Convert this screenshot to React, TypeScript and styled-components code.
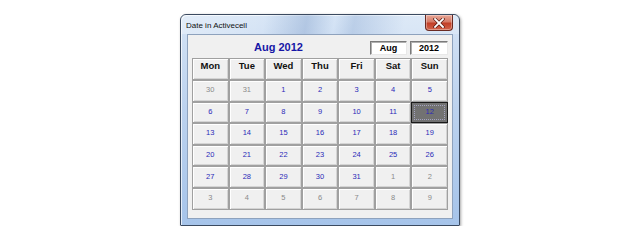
import React from "react"
import styled, { createGlobalStyle } from "styled-components"

const GlobalStyle = createGlobalStyle`
	html, body {
		margin: 0;
		padding: 0;
		background: #ffffff;
		font-family: "Liberation Sans", Arial, sans-serif;
	}
`

const Page = styled.div`
	padding: 14px 0 0 180px;
`

const Window = styled.div`
	width: 280px;
	height: 212px;
	box-sizing: border-box;
	border: 1px solid #3b4a60;
	border-radius: 6px 6px 1px 1px;
	background: linear-gradient(180deg, #d4e3f5 0%, #bcd2ee 45%, #a6c4ea 100%);
	box-shadow: 1px 1px 3px rgba(0, 0, 0, 0.35), inset 1px 1px 0 rgba(255, 255, 255, 0.7);
	display: flex;
	flex-direction: column;
	overflow: hidden;
`

const TitleBar = styled.div`
	height: 19px;
	display: flex;
	align-items: flex-start;
	padding-left: 5px;
	background: linear-gradient(
		100deg,
		rgba(255, 255, 255, 0.35) 0%,
		rgba(255, 255, 255, 0.1) 30%,
		rgba(120, 150, 195, 0.35) 45%,
		rgba(255, 255, 255, 0.05) 55%,
		rgba(120, 150, 195, 0.25) 62%,
		rgba(255, 255, 255, 0.2) 80%
	);
`

const Caption = styled.span`
	flex: 1;
	font-size: 8px;
	line-height: 18px;
	color: #101010;
	padding-top: 2px;
`

const CloseButton = styled.div`
	width: 28px;
	height: 16px;
	margin-right: 6px;
	box-sizing: border-box;
	border: 1px solid #6a2a22;
	border-top: none;
	border-radius: 0 0 4px 4px;
	background: linear-gradient(180deg, #e9a898 0%, #d57a66 45%, #c23f27 55%, #d2644b 100%);
	box-shadow: inset 0 0 0 1px rgba(255, 255, 255, 0.35);
	display: flex;
	align-items: center;
	justify-content: center;
`

const Client = styled.div`
	flex: 1;
	margin: 0 6px 6px 6px;
	box-sizing: border-box;
	border: 1px solid #8ea2bd;
	background: #f0f0f0;
	padding: 0 4px;
	display: flex;
	flex-direction: column;
`

const Header = styled.div`
	height: 22px;
	display: flex;
	align-items: center;
	padding-top: 1px;
`

const MonthTitle = styled.div`
	flex: 1;
	text-align: center;
	font-size: 11px;
	font-weight: bold;
	color: #1616a6;
	padding-right: 2px;
`

const Field = styled.div<{ $w: number }>`
	width: ${(p) => p.$w}px;
	height: 14px;
	box-sizing: border-box;
	margin-left: 3px;
	margin-top: 2px;
	border: 1px solid;
	border-color: #7a7a7a #e8e8e8 #e8e8e8 #7a7a7a;
	box-shadow: inset 1px 1px 0 #b0b0b0;
	background: #ffffff;
	font-size: 9px;
	font-weight: bold;
	color: #000;
	display: flex;
	align-items: center;
	justify-content: center;
`

const Grid = styled.div`
	width: 256px;
	display: grid;
	grid-template-columns: repeat(7, 1fr);
	grid-template-rows: 22px repeat(6, 21.6px);
`

const HeadCell = styled.div`
	box-sizing: border-box;
	border: 1px solid #a0a0a0;
	box-shadow: inset 1px 1px 0 #ffffff, inset -1px -1px 0 #d4d4d4;
	background: #f0f0f0;
	font-size: 9.5px;
	font-weight: bold;
	color: #111;
	display: flex;
	align-items: flex-start;
	justify-content: center;
	padding-top: 1px;
`

const DayCell = styled.div<{ $muted?: boolean; $selected?: boolean }>`
	position: relative;
	box-sizing: border-box;
	border: 1px solid ${(p) => (p.$selected ? "#1a1a1a" : "#a0a0a0")};
	box-shadow: ${(p) =>
		p.$selected ? "none" : "inset 1px 1px 0 #ffffff, inset -1px -1px 0 #d4d4d4"};
	background: ${(p) => (p.$selected ? "#727272" : "#f0f0f0")};
	font-size: 7.5px;
	color: ${(p) => (p.$muted ? "#8a8a8a" : "#2a2ab8")};
	display: flex;
	align-items: center;
	justify-content: center;
	padding-bottom: 2px;

	${(p) =>
		p.$selected &&
		`
		&::after {
			content: "";
			position: absolute;
			inset: 2px;
			border: 1px dotted #a4a4c0;
		}
	`}
`

const days = ["Mon", "Tue", "Wed", "Thu", "Fri", "Sat", "Sun"]

type Day = { n: number; muted: boolean }

const buildDays = (): Day[] => {
	const list: Day[] = [
		{ n: 30, muted: true },
		{ n: 31, muted: true },
	]
	for (let i = 1; i <= 31; i++) list.push({ n: i, muted: false })
	for (let i = 1; i <= 9; i++) list.push({ n: i, muted: true })
	return list
}

const CloseIcon = () => (
	<svg width="12" height="10" viewBox="0 0 12 10">
		<path d="M2 1 L10 9 M10 1 L2 9" stroke="#5a1c14" strokeWidth="3.2" strokeLinecap="square" />
		<path d="M2 1 L10 9 M10 1 L2 9" stroke="#ffffff" strokeWidth="1.8" strokeLinecap="square" />
	</svg>
)

export default function App() {
	const list = buildDays()
	return (
		<Page>
			<GlobalStyle />
			<Window>
				<TitleBar>
					<Caption>Date in Activecell</Caption>
					<CloseButton>
						<CloseIcon />
					</CloseButton>
				</TitleBar>
				<Client>
					<Header>
						<MonthTitle>Aug 2012</MonthTitle>
						<Field $w={37}>Aug</Field>
						<Field $w={38}>2012</Field>
					</Header>
					<Grid>
						{days.map((d) => (
							<HeadCell key={d}>{d}</HeadCell>
						))}
						{list.map((d, i) => (
							<DayCell key={i} $muted={d.muted} $selected={!d.muted && d.n === 12}>
								{d.n}
							</DayCell>
						))}
					</Grid>
				</Client>
			</Window>
		</Page>
	)
}
